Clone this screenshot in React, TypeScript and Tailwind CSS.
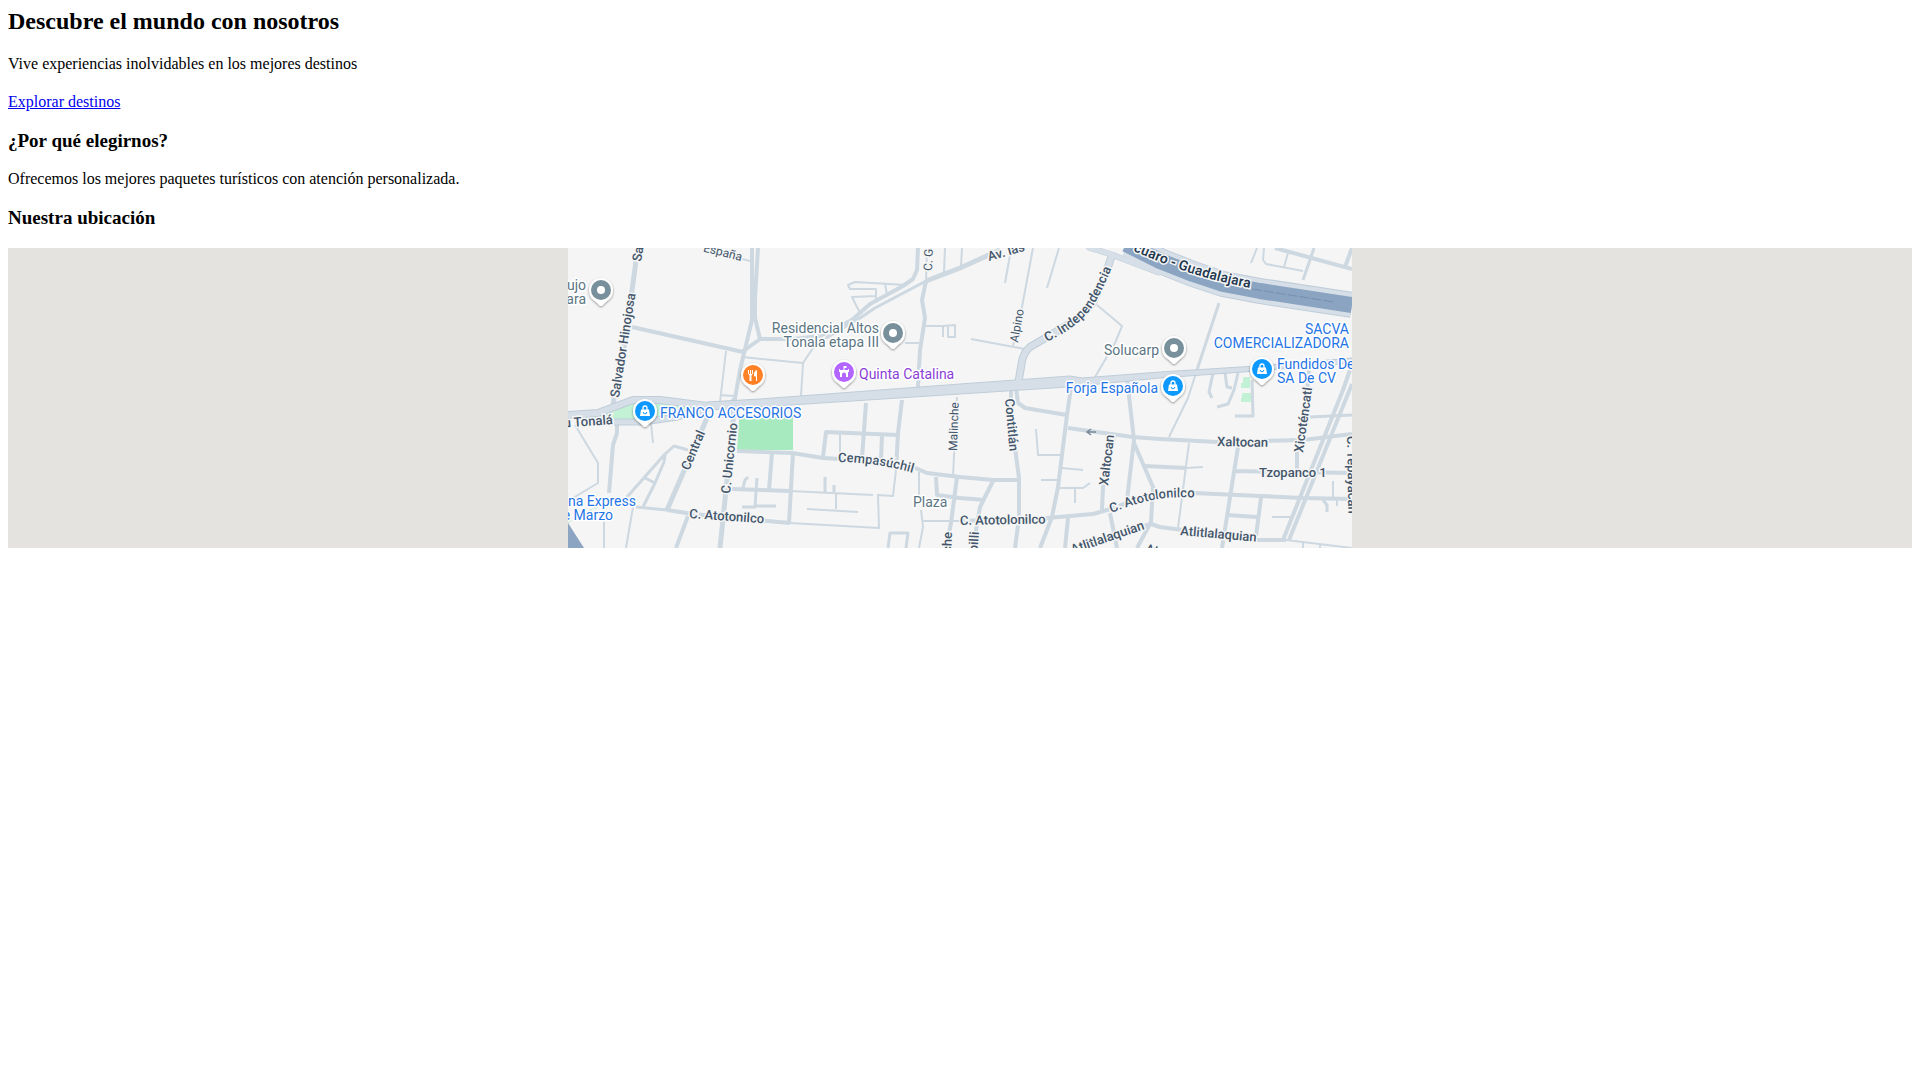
type Road = { w: number; d: string };

type Label = {
  text: string;
  x: number;
  y: number;
  rotate?: number;
  anchor?: "start" | "end";
  minor?: boolean;
};

type Place = {
  kind: "generic" | "food" | "event" | "shop";
  x: number;
  y: number;
};

const roads: Road[] = [
  // north west
  { w: 5, d: "M70 -2L63 50L60 78L45 156" },
  { w: 2, d: "M170 10L182 13" },
  { w: 4, d: "M64 79L175 104" },
  { w: 4, d: "M184 0V72L172 122L166 156" },
  { w: 4, d: "M190 0L187 50V70L192 91" },
  { w: 4, d: "M174 104L192 91H225L252 88L284 72L302 56L335 38L345 31L349 22L350 0" },
  { w: 3, d: "M258 90L292 70L307 60L358 33" },
  { w: 5, d: "M358 33L392 20L432 2" },
  { w: 2, d: "M158 103L152 154M152 147L166 148" },
  { w: 2, d: "M174 109L235 115L245 100L258 90M235 115L233 148" },
  { w: 2, d: "M338 37L287 34L280 37L282 41H308V52M317 35L319 47M292 65L284 49L308 48" },
  { w: 2, d: "M359 0L358 33M377 0L376 24" },
  { w: 4, d: "M358 33L354 52L357 70L352 102L350 139" },
  { w: 2, d: "M357 78H375V89M375 78L387 77V89H380V78M337 95H351" },
  // north east
  { w: 2, d: "M394 0L393 18M442 7L437 35M465 0L454 59L445 98M491 0L479 40" },
  { w: 2, d: "M403 91L457 101M529 57L554 78L547 95L527 129" },
  { w: 3, d: "M651 55L629 122" },
  { w: 2, d: "M689 0L683 15M696 0L695 12L698 16L735 23M720 5L716 19" },
  { w: 3, d: "M746 0L742 12L735 32" },
  { w: 4, d: "M707 0L784 21M784 0L777 19" },
  { w: 2, d: "M629 122L620 150L601 189" },
  { w: 3, d: "M645 125L641 144L644 150M657 125L659 139L664 140M670 125L666 142L660 156L649 159" },
  { w: 3, d: "M684 132L685 168L667 168" },
  // south west
  { w: 4, d: "M49 175V185L45 197L41 245" },
  { w: 2, d: "M7 177L30 215V235L5 250M83 175L85 195" },
  { w: 3, d: "M120 202L106 198L97 206L59 249M97 206L96 214L87 235L75 259M75 229L87 235" },
  { w: 5, d: "M139 170L99 262" },
  { w: 3, d: "M68 259L99 262" },
  { w: 4, d: "M99 262L125 266L222 275M120 268L108 300" },
  { w: 2, d: "M65 259L58 300M36 265V300" },
  { w: 5, d: "M166 150L165 175L158 242L152 300" },
  { w: 4, d: "M164 241L222 243" },
  { w: 3, d: "M175 240L177 232L180 229M189 230L187 259H174M187 258H208" },
  { w: 2, d: "M222 243L305 247M268 245V261M239 261L290 264" },
  { w: 3, d: "M257 229V244M266 237V244" },
  { w: 4, d: "M169 203L224 205L255 210L272 211L345 219L359 225L392 229L425 232H451" },
  { w: 4, d: "M204 205L201 242M225 205L221 275" },
  { w: 2, d: "M222 275L311 280L310 247L325 248L328 222" },
  { w: 4, d: "M328 222L330 185L334 152M298 155L294 210M255 209L258 184L330 187M314 187L313 212" },
  { w: 2, d: "M272 185V209M351 224V247M353 262L355 279L351 300" },
  { w: 4, d: "M368 229L369 247L392 250L417 252M389 229L383 275L378 300" },
  { w: 2, d: "M355 273H392M389 149L385 228" },
  { w: 3, d: "M320 300L322 285H340L338 300" },
  // south east
  { w: 4, d: "M443 140V152L447 200L451 230V270L447 300" },
  { w: 4, d: "M448 140L450 155L457 160L499 167" },
  { w: 4, d: "M503 139L499 167L490 239L484 269L472 300" },
  { w: 4, d: "M500 180L565 189L592 191L649 194L735 192L784 186" },
  { w: 2, d: "M468 181L470 207H492M494 220L515 222M473 232H489M490 240L515 240L522 235M507 241V255" },
  { w: 4, d: "M425 233L412 259L405 300M392 273L479 270L525 266L539 262L580 248L625 245L735 250L782 251" },
  { w: 4, d: "M500 270L497 300M546 189L535 239L534 262M542 265L549 300" },
  { w: 4, d: "M559 130L566 192L559 252M566 195L585 239L583 274L569 300" },
  { w: 4, d: "M577 218L618 220M583 276L549 285M583 276L592 279L690 292H718" },
  { w: 2, d: "M618 220L635 219M621 195L610 280M718 292L784 300M735 294V300M752 296V300" },
  { w: 4, d: "M670 199L654 300M667 223L784 225M659 267L689 269M693 250L688 288" },
  { w: 3, d: "M742 169L784 167" },
  { w: 4, d: "M782 122L775 142L715 292M784 136L721 292" },
  { w: 4, d: "M741 122L735 190L729 202V222" },
  { w: 2, d: "M704 269H722M765 233V249M769 252V258" },
  { w: 3, d: "M755 252L759 257V264" },
];

const streets: Label[] = [
  { text: "Salvador Hinojosa", x: 51, y: 150, rotate: -81 },
  { text: "Sa", x: 73, y: 14, rotate: -80 },
  { text: "España", x: 173, y: 13, rotate: 14, anchor: "end", minor: true },
  { text: "C. Gu", x: 364, y: 23, rotate: -88, minor: true },
  { text: "Av. las", x: 421, y: 13, rotate: -16 },
  { text: "Alpino", x: 450, y: 95, rotate: -80, minor: true },
  { text: "u Tonalá", x: 45, y: 176, rotate: -4, anchor: "end" },
  { text: "Central", x: 121, y: 223, rotate: -67 },
  { text: "C. Unicornio", x: 162, y: 246, rotate: -84 },
  { text: "C. Atotonilco", x: 121, y: 270, rotate: 4 },
  { text: "Malinche", x: 389, y: 203, rotate: -88, minor: true },
  { text: "che", x: 384, y: 284, rotate: -88, anchor: "end" },
  { text: "pilli", x: 411, y: 284, rotate: -86, anchor: "end" },
  { text: "Contitlán", x: 437, y: 151, rotate: 85 },
  { text: "Xaltocan", x: 540, y: 238, rotate: -83 },
  { text: "Xaltocan", x: 649, y: 198, rotate: 1 },
  { text: "Tzopanco 1", x: 691, y: 229 },
  { text: "C. Atotolonilco", x: 392, y: 277, rotate: -1 },
  { text: "Atlitlalaquian", x: 577, y: 281, rotate: -19, anchor: "end" },
  { text: "Atlitlalaquian", x: 612, y: 287, rotate: 5 },
  { text: "Atoto", x: 577, y: 305, rotate: 10 },
  { text: "Xicoténcatl", x: 735, y: 205, rotate: -82 },
  { text: "C. Tepayacan", x: 779, y: 188, rotate: 89 },
];

const places: Place[] = [
  { kind: "generic", x: 33, y: 42 },
  { kind: "generic", x: 325, y: 85 },
  { kind: "generic", x: 606, y: 100 },
  { kind: "food", x: 185, y: 127 },
  { kind: "event", x: 276, y: 124 },
  { kind: "shop", x: 77, y: 163 },
  { kind: "shop", x: 605, y: 138 },
  { kind: "shop", x: 694, y: 121 },
];

const pinColors = {
  generic: "#78909c",
  food: "#ff8126",
  event: "#b266ff",
  shop: "#0d99ff",
};

function Pin({ kind, x, y }: Place) {
  return (
    <g transform={`translate(${x} ${y})`}>
      <path
        d="M0 16C-1.500 16 -2.500 14 -5 12C-9 9 -12 6 -12 0A12 12 0 0 1 12 0C12 6 9 9 5 12C2.500 14 1.500 16 0 16Z"
        fill="#fff"
        filter="url(#pin-shadow)"
      />
      <circle r="10" fill={pinColors[kind]} />
      {kind === "generic" && <circle r="4" fill="#fff" />}
      {kind === "food" && (
        <g fill="none" stroke="#fff">
          <path d="M-4.500 -5V-2Q-4.500 0 -2.500 0Q-.5 0 -.5 -2V-5M-2.500 -5V0" />
          <path d="M-2.500 -1V6" strokeWidth="2" />
          <path d="M3.500 6V-4.500Q1.500 -4 1.500 -1V1H3.500" fill="#fff" />
        </g>
      )}
      {kind === "event" && (
        <g fill="#fff">
          <path d="M-.5 -6H2.500V-4H.5V-2H-.5Z" />
          <path
            fillRule="evenodd"
            d="M-5 -3H-4V-2H4V-3H5V0H4V5H-4V0H-5ZM-2 5H2V2.500A2 2 0 0 0 -2 2.500Z"
          />
        </g>
      )}
      {kind === "shop" && (
        <g>
          <path d="M-4 -1.500H4L5 5H-5Z" fill="#fff" />
          <path d="M-2 -1V-3A2 2 0 0 1 2 -3V-1" fill="none" stroke="#fff" strokeWidth="1.300" />
          <path d="M-1.800 1A1.800 1.800 0 0 0 1.800 1" fill="none" stroke="#0d99ff" />
        </g>
      )}
    </g>
  );
}

function LocationMap() {
  return (
    <svg
      viewBox="0 0 784 300"
      className="h-full w-auto shrink-0 font-['Roboto',sans-serif]"
      role="img"
      aria-label="Mapa de Tonalá"
    >
      <defs>
        <filter id="pin-shadow" x="-30%" y="-30%" width="160%" height="160%">
          <feDropShadow dx="0" dy="1" stdDeviation="1" floodColor="#000" floodOpacity="0.45" />
        </filter>
        <path id="independencia" d="M479 94L494 86Q514 74 525 58Q535 42 547 12" />
        <path id="carretera" d="M500 -24Q545 -5 592 14Q635 31 682 40" />
        <path id="cempasuchil" d="M270 214Q310 214 352 227" />
        <path id="atotolonilco" d="M543 265Q568 255 589 251Q609 248 640 250" />
      </defs>

      <rect width="784" height="300" fill="#f5f5f5" />

      {/* Parks */}
      <path d="M0 171L42 161L62 153H92L134 160L110 167L75 171Z" fill="#c3f1d5" />
      <path d="M171 172V170L225 169V202H169Z" fill="#a8eac0" />
      <path d="M675 129H682V140H673V135H675ZM674 145H683V154H673V150H674Z" fill="#c3f1d5" />
      <path d="M0 275Q16 263 34 258" fill="none" stroke="#b9e8c8" strokeDasharray="4 2" />

      {/* Streets */}
      <g fill="none" stroke="#cdd8e1" strokeLinejoin="round">
        {roads.map((road) => (
          <path key={road.d} d={road.d} strokeWidth={road.w} />
        ))}
      </g>

      {/* Avenues, casing first */}
      <g fill="none" strokeLinejoin="round">
        <g stroke="#bfcdd9">
          <path d="M0 167L30 165L65 152H92L139 158L192 155" strokeWidth="8" />
          <path d="M46 174H75L110 169L139 161" strokeWidth="7" />
          <path d="M545 4L539 22L525 55L508 72L479 89L462 99Q456 104 454 113L450 137" strokeWidth="8" />
          <path d="M519 -1L542 6L592 25" strokeWidth="6" />
          <path d="M560 -3L592 13L625 26L655 36L692 43L784 57" strokeWidth="26" />
        </g>
        <path
          d="M139 154L192 151L392 136L502 128L514 130L592 124L689 118L784 110V115L689 123L592 130L500 139L392 146L192 159L139 162Z"
          fill="#d6dfe7"
          stroke="#bfcdd9"
        />
        <g stroke="#d6dfe7">
          <path d="M0 167L30 165L65 152H92L139 158L192 155" strokeWidth="6" />
          <path d="M46 174H75L110 169L139 161" strokeWidth="5" />
          <path d="M545 4L539 22L525 55L508 72L479 89L462 99Q456 104 454 113L450 137" strokeWidth="6" />
          <path d="M519 -1L542 6L592 25" strokeWidth="5" />
          <path d="M560 -3L592 13L625 26L655 36L692 43L784 57" strokeWidth="24" />
        </g>
        <path d="M558 -4L592 13L625 26L655 36L692 43L784 57" stroke="#8aa4c1" strokeWidth="16" />
        <path d="M684 41L766 54" stroke="#7590b0" strokeDasharray="10 2" />
      </g>
      <path d="M0 275L16 300H0Z" fill="#8aa4c1" />
      <path d="M528 184H520M523 181L519 184L523 187" fill="none" stroke="#7b8b99" strokeWidth="1.500" />

      {/* Street names */}
      <g className="text-[13px] font-medium" fill="#43566b" stroke="#f5f5f5" strokeWidth="3" paintOrder="stroke">
        {streets.map((s) => (
          <text
            key={`${s.text}-${s.x}`}
            textAnchor={s.anchor}
            transform={`translate(${s.x} ${s.y}) rotate(${s.rotate ?? 0})`}
            className={s.minor ? "text-xs font-normal" : ""}
          >
            {s.text}
          </text>
        ))}
        <text className="font-semibold">
          <textPath href="#independencia">C. Independencia</textPath>
        </text>
        <text>
          <textPath href="#cempasuchil">Cempasúchil</textPath>
        </text>
        <text>
          <textPath href="#atotolonilco">C. Atotolonilco</textPath>
        </text>
        <text className="text-sm font-semibold" fill="#233850" textAnchor="end">
          <textPath href="#carretera" startOffset="100%">
            cuaro - Guadalajara
          </textPath>
        </text>
      </g>

      {places.map((place) => (
        <Pin key={`${place.x}-${place.y}`} {...place} />
      ))}

      {/* Place names */}
      <g className="text-sm" stroke="#fff" strokeWidth="3" strokeLinejoin="round" paintOrder="stroke">
        <g fill="#5b7583">
          <text x="18" y="42" textAnchor="end">ujo</text>
          <text x="18" y="56" textAnchor="end">ara</text>
          <text x="311" y="85" textAnchor="end">Residencial Altos</text>
          <text x="311" y="99" textAnchor="end">Tonala etapa III</text>
          <text x="591" y="107" textAnchor="end">Solucarp</text>
          <text x="345" y="259">Plaza</text>
        </g>
        <g fill="#8a3ed6">
          <text x="291" y="131">Quinta Catalina</text>
        </g>
        <g fill="#1f75e5">
          <text x="92" y="170">FRANCO ACCESORIOS</text>
          <text x="590" y="145" textAnchor="end">Forja Española</text>
          <text x="781" y="86" textAnchor="end">SACVA</text>
          <text x="781" y="100" textAnchor="end">COMERCIALIZADORA</text>
          <text x="709" y="121">Fundidos De</text>
          <text x="709" y="135">SA De CV</text>
          <text x="68" y="258" textAnchor="end">na Express</text>
          <text x="45" y="272" textAnchor="end">e Marzo</text>
        </g>
      </g>
    </svg>
  );
}

export default function App() {
  return (
    <main className="p-2 bg-white text-black text-base leading-[18px] font-['Liberation_Serif',serif]">
      <section>
        <h2 className="mb-5 text-2xl leading-[27px] font-bold">Descubre el mundo con nosotros</h2>
        <p className="mb-5">Vive experiencias inolvidables en los mejores destinos</p>
        <a href="#destinos" className="block w-fit text-[#0000ee] underline">
          Explorar destinos
        </a>
      </section>

      <section>
        <h3 className="my-[19px] text-[19px] leading-[21px] font-bold">¿Por qué elegirnos?</h3>
        <p>Ofrecemos los mejores paquetes turísticos con atención personalizada.</p>
      </section>

      <section>
        <h3 className="my-[19px] text-[19px] leading-[21px] font-bold">Nuestra ubicación</h3>
        <div className="mt-5 flex h-[300px] justify-center overflow-hidden bg-[#e5e3df]">
          <LocationMap />
        </div>
      </section>
    </main>
  );
}
